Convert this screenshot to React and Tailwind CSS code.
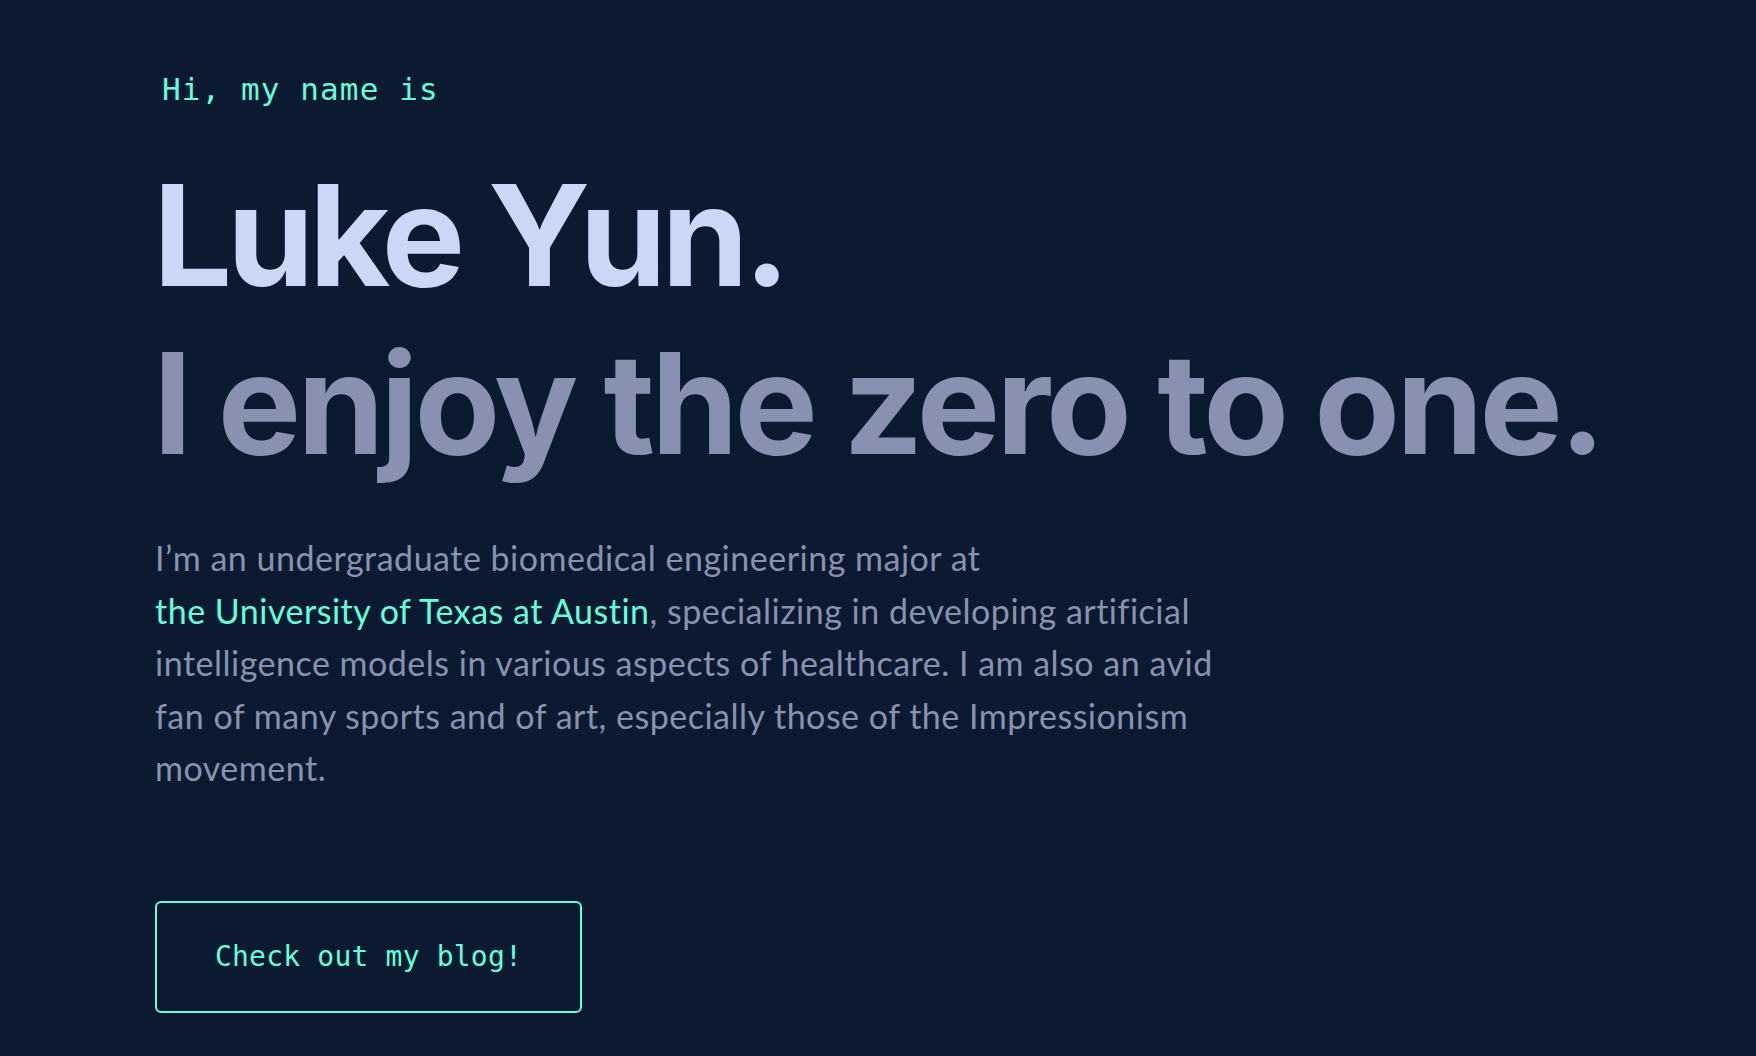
export default function App() {
  return (
    <main className="min-h-[1056px] w-full bg-[#0b1a30] pl-[155px] pt-[74px]">
      <section className="flex flex-col items-start">
        <p className="ml-[7px] mb-[53px] font-['DejaVu_Sans_Mono',monospace] text-[31px] leading-none tracking-[1.1px] text-[#64ffda]">
          Hi, my name is
        </p>
        <h1 className="ml-[-2px] font-['Inter',sans-serif] text-[140px] font-bold leading-[1.1] tracking-[-5.2px] text-[#ccd6f6]">
          Luke Yun.
        </h1>
        <h2 className="ml-[-2px] mt-[14px] font-['Inter',sans-serif] text-[140px] font-bold leading-[1.1] tracking-[-3.9px] text-[#8892b0]">
          I enjoy the zero to one.
        </h2>
        <p className="mt-[52px] max-w-[1100px] font-['Lato',sans-serif] text-[34px] leading-[52.6px] tracking-[0.5px] text-[#8892b0]">
          I’m an undergraduate biomedical engineering major at{' '}
          <a href="#" className="inline-block text-[#64ffda]">
            the University of Texas at Austin
          </a>
          , specializing in developing artificial intelligence models in various aspects of healthcare. I am also an avid
          fan of many sports and of art, especially those of the Impressionism movement.
        </p>
        <a
          href="#"
          className="mt-[106px] rounded-[6px] border-2 border-[#64ffda] px-[58px] py-[38px] font-['DejaVu_Sans_Mono',monospace] text-[28px] leading-[32px] tracking-[0.2px] text-[#64ffda]"
        >
          Check out my blog!
        </a>
      </section>
    </main>
  )
}
